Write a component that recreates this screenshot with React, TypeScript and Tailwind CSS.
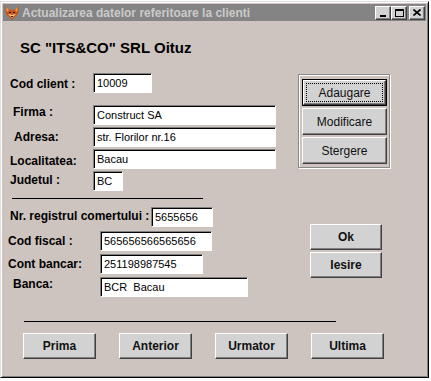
import React from 'react';

const raised =
  'border border-t-white border-l-white border-r-[#404040] border-b-[#404040] shadow-[inset_-1px_-1px_0_#808080] bg-[#d2d2d2]';

const sunken =
  'border border-t-[#808080] border-l-[#808080] border-b-white border-r-white shadow-[inset_1px_1px_0_#000] bg-white';

type Row = {
  label: string;
  pl: string;
  lw: string;
  lmt: string;
  mt: string;
  iw: string;
  value: string;
};

const topRows: Row[] = [
  { label: 'Cod client :', pl: 'pl-[7px]', lw: 'w-[90px]', lmt: 'mt-[4px]', mt: 'mt-[16px]', iw: 'w-[59px]', value: '10009' },
  { label: 'Firma :', pl: 'pl-[10px]', lw: 'w-[90px]', lmt: 'mt-0', mt: 'mt-[12px]', iw: 'w-[183px]', value: 'Construct SA' },
  { label: 'Adresa:', pl: 'pl-[11px]', lw: 'w-[90px]', lmt: 'mt-[3px]', mt: 'mt-[2px]', iw: 'w-[183px]', value: 'str. Florilor nr.16' },
  { label: 'Localitatea:', pl: 'pl-[7px]', lw: 'w-[90px]', lmt: 'mt-[5px]', mt: 'mt-[2px]', iw: 'w-[183px]', value: 'Bacau' },
  { label: 'Judetul :', pl: 'pl-[7px]', lw: 'w-[90px]', lmt: 'mt-[2px]', mt: 'mt-[2px]', iw: 'w-[30px]', value: 'BC' },
];

const bottomRows: Row[] = [
  { label: 'Nr. registrul comertului :', pl: 'pl-[7px]', lw: 'w-[148px]', lmt: 'mt-[2px]', mt: 'mt-[8px]', iw: 'w-[62px]', value: '5655656' },
  { label: 'Cod fiscal :', pl: 'pl-[5px]', lw: 'w-[97px]', lmt: 'mt-[3px]', mt: 'mt-[4px]', iw: 'w-[112px]', value: '565656566565656' },
  { label: 'Cont bancar:', pl: 'pl-[5px]', lw: 'w-[97px]', lmt: 'mt-[3px]', mt: 'mt-[3px]', iw: 'w-[103px]', value: '251198987545' },
  { label: 'Banca:', pl: 'pl-[10px]', lw: 'w-[97px]', lmt: 'mt-0', mt: 'mt-[3px]', iw: 'w-[148px]', value: 'BCR  Bacau' },
];

function FieldRow({ row }: { row: Row }) {
  return (
    <div className={`flex items-start h-[20px] ${row.mt}`}>
      <span className={`shrink-0 ${row.lw} ${row.pl} ${row.lmt} text-[12px] leading-[14px] font-bold text-black whitespace-pre`}>
        {row.label}
      </span>
      <div className={`shrink-0 h-[20px] ${row.iw} ${sunken} flex items-center pl-[3px] pt-[1px] text-[11px] text-black whitespace-pre`}>
        {row.value}
      </div>
    </div>
  );
}

function FoxIcon() {
  return (
    <svg width="16" height="16" viewBox="0 0 16 16">
      <polygon points="1,1 6,5 10,5 15,1 14,9 8,15 2,9" fill="#c4561c" />
      <polygon points="2,2 5,5 3,7" fill="#f0a040" />
      <polygon points="14,2 11,5 13,7" fill="#f0a040" />
      <polygon points="4,9 8,13 12,9 8,10" fill="#f7d08a" />
      <rect x="5" y="7" width="2" height="1" fill="#301000" />
      <rect x="9" y="7" width="2" height="1" fill="#301000" />
      <rect x="7" y="11" width="2" height="1" fill="#301000" />
    </svg>
  );
}

function CtrlButton({ children }: { children: React.ReactNode }) {
  return (
    <div className={`w-[16px] h-[14px] ${raised} bg-[#c0c0c0] flex items-center justify-center`}>{children}</div>
  );
}

function WinButton({ label, bold, className }: { label: string; bold?: boolean; className: string }) {
  return (
    <div
      className={`${className} ${raised} flex items-center justify-center text-[12px] leading-[14px] text-[#111] ${bold ? 'font-bold' : ''}`}
    >
      {label}
    </div>
  );
}

export default function App() {
  return (
    <div className="w-[431px] h-[381px] bg-white font-['Liberation_Sans',Arial,sans-serif] overflow-hidden pt-[1px]">
      <div className="w-[429px] h-[377px] border border-t-[#dfdfdf] border-l-[#dfdfdf] border-r-black border-b-black shadow-[inset_1px_1px_0_#fff,inset_-1px_-1px_0_#808080] bg-[#cec4bf] p-[2px] flex flex-col">
        {/* title bar */}
        <div className="h-[17px] bg-[#848484] flex items-center pl-[1px] pr-[1px] shrink-0">
          <FoxIcon />
          <span className="ml-[2px] text-[12px] font-bold text-[#cacaca] whitespace-nowrap">
            Actualizarea datelor referitoare la clienti
          </span>
          <div className="ml-auto flex items-center">
            <CtrlButton>
              <div className="w-[6px] h-[2px] bg-black mt-[6px]" />
            </CtrlButton>
            <CtrlButton>
              <div className="w-[9px] h-[8px] border border-black border-t-2" />
            </CtrlButton>
            <div className="w-[2px]" />
            <CtrlButton>
              <svg width="8" height="7" viewBox="0 0 8 7">
                <path d="M0.5 0.5 L7.5 6.5 M7.5 0.5 L0.5 6.5" stroke="#000" strokeWidth="1.6" />
              </svg>
            </CtrlButton>
          </div>
        </div>

        {/* body */}
        <div className="flex flex-col">
          <div className="mt-[18px] pl-[17px] text-[15px] leading-[18px] font-bold text-black">SC "ITS&amp;CO" SRL Oituz</div>

          <div className="flex">
            <div className="w-[295px] shrink-0 flex flex-col">
              {topRows.map(r => (
                <FieldRow key={r.label} row={r} />
              ))}
              <div className="ml-[9px] mt-[7px] w-[191px] h-[1px] bg-black" />
              {bottomRows.map(r => (
                <FieldRow key={r.label} row={r} />
              ))}
            </div>

            <div className="flex flex-col">
              <div className="mt-[17px] w-[92px] h-[94px] border border-[#8a8a8a] shadow-[inset_1px_1px_0_#fff,1px_1px_0_#fff] pt-[4px] pl-[3px] flex flex-col gap-[2px]">
                <div className="w-[85px] h-[27px] border border-black">
                  <div className={`w-full h-full ${raised} p-[2px]`}>
                    <div className="w-full h-full border border-dotted border-black flex items-center justify-center text-[12px] leading-[14px] text-[#111]">
                      Adaugare
                    </div>
                  </div>
                </div>
                <WinButton label="Modificare" className="w-[85px] h-[27px]" />
                <WinButton label="Stergere" className="w-[85px] h-[27px]" />
              </div>
              <div className="ml-[12px] mt-[56px] flex flex-col gap-[2px]">
                <WinButton label="Ok" bold className="w-[72px] h-[26px]" />
                <WinButton label="Iesire" bold className="w-[72px] h-[26px]" />
              </div>
            </div>
          </div>

          <div className="ml-[21px] mt-[24px] w-[312px] h-[1px] bg-black" />
          <div className="ml-[20px] mt-[11px] flex gap-[23px]">
            <WinButton label="Prima" bold className="w-[73px] h-[26px]" />
            <WinButton label="Anterior" bold className="w-[73px] h-[26px]" />
            <WinButton label="Urmator" bold className="w-[73px] h-[26px]" />
            <WinButton label="Ultima" bold className="w-[73px] h-[26px]" />
          </div>
        </div>
      </div>
    </div>
  );
}
